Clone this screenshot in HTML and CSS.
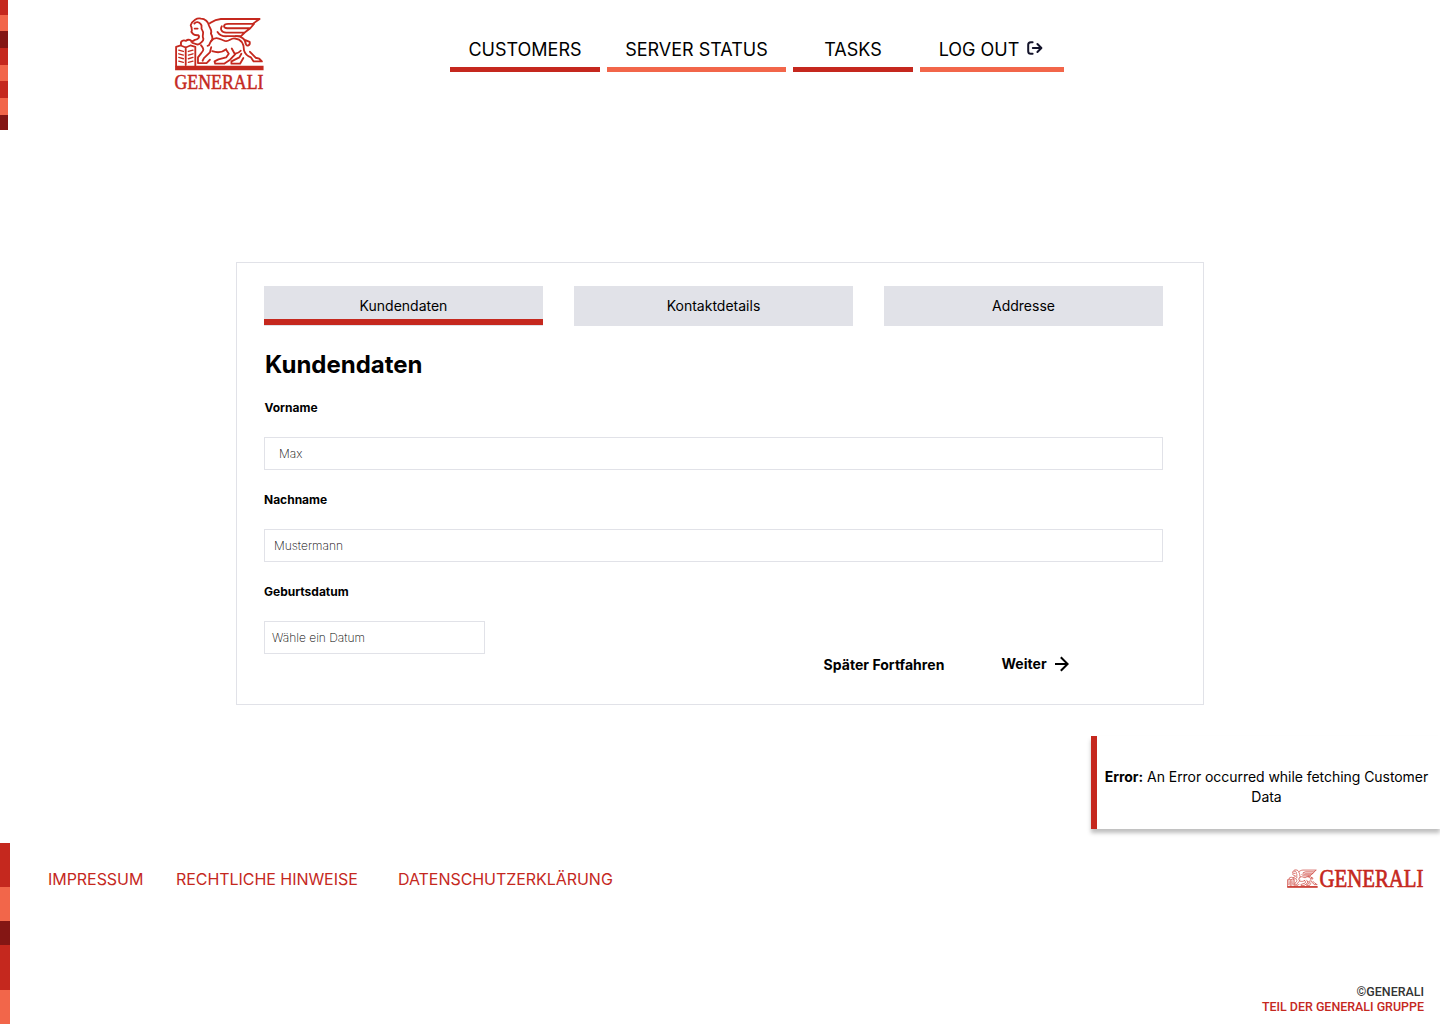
FILE: index.html
```html
<!DOCTYPE html>
<html lang="de">
<head>
<meta charset="utf-8">
<title>Generali – Kundendaten</title>
<link rel="stylesheet" href="styles.css">
</head>
<body>
<svg width="0" height="0" class="defs" aria-hidden="true">
  <symbol id="lion" viewBox="28 18 272 166">
    <g fill="none" stroke="currentColor" stroke-width="5.5" stroke-linejoin="round" stroke-linecap="round">
      <path d="M33 168V111L47 107L62 113L76 107L91 111V168M62 113V166"/>
      <path stroke-width="4" d="M41 121L55 125M41 132L55 136M41 143L55 147M41 154L55 158M70 125L84 121M70 136L84 132M70 147L84 143M70 158L84 154"/>
      <path d="M48 104C45 94 54 89 63 93C70 86 80 92 79 96L90 90C99 89 106 82 100 76C94 76 88 77 84 72L79 66C83 61 79 59 80 54L77 46C83 31 96 23 108 26C121 26 130 36 132 46C135 56 143 62 138 71C143 80 146 87 139 94C132 99 137 108 128 108"/>
      <path d="M88 41C93 34 103 36 107 42C115 49 105 53 112 61C119 69 111 75 114 83C120 93 108 99 102 103C94 107 87 99 82 99M89 56H98"/>
      <path d="M108 106C117 117 118 121 109 130L99 143V160H125L135 150M113 153L117 145L135 128L139 112"/>
      <path d="M135 40C145 33 151 28 168 27H285L264 42H190C174 42 174 55 187 55H257L268 42M257 55L240 68H184C169 68 166 57 171 49M240 68L229 79H187C173 80 163 74 158 66"/>
      <path d="M139 93C152 79 162 86 177 92C191 101 198 82 211 86C230 88 238 103 238 122C241 132 250 140 259 143L267 155H292L284 147L273 144L256 126"/>
      <path d="M213 79C230 78 243 88 243 102C246 112 258 107 255 96L242 91M142 124C159 130 175 126 184 118M184 120L192 132L184 143L161 149L149 155L151 162H178L196 150L211 134L201 116"/>
      <path d="M211 132C218 131 224 128 228 123M230 132L224 143L200 155V162H226L236 145"/>
    </g>
    <path fill="currentColor" d="M30 168H297V182H30Z"/>
  </symbol>
</svg>

<header class="header">
  <div class="stripes stripes-top"></div>
  <a class="logo">
    <svg class="logo-lion"><use href="#lion"/></svg>
    <svg class="logo-name" viewBox="0 0 92 26"><text x="0.5" y="19" textLength="89" lengthAdjust="spacingAndGlyphs">GENERALI</text></svg>
  </a>
  <nav class="nav">
    <a class="nav-item nav-customers">CUSTOMERS</a>
    <a class="nav-item nav-status">SERVER STATUS</a>
    <a class="nav-item nav-tasks">TASKS</a>
    <a class="nav-item nav-logout">LOG OUT
      <svg class="logout-icon" viewBox="0 0 16 14"><path d="M5.6 1.2H3.8Q1.2 1.2 1.2 3.8V10.2Q1.2 12.8 3.8 12.8H5.6M5.8 7H14.2M10.4 3L14.4 7L10.4 11"/></svg>
    </a>
  </nav>
</header>

<main class="main">
  <section class="card">
    <div class="tabs">
      <a class="tab tab-active">Kundendaten</a>
      <a class="tab">Kontaktdetails</a>
      <a class="tab">Addresse</a>
    </div>
    <h1 class="title">Kundendaten</h1>
    <div class="field"><span class="label label-first">Vorname</span><div class="input input-first">Max</div></div>
    <div class="field"><span class="label">Nachname</span><div class="input input-last">Mustermann</div></div>
    <div class="field"><span class="label">Geburtsdatum</span><div class="input input-date">Wähle ein Datum</div></div>
    <div class="actions">
      <a class="later">Später Fortfahren</a>
      <a class="next">Weiter
        <svg class="arrow" viewBox="0 0 14 16"><path d="M0 8H12.5M5.8 1.2L12.6 8L5.8 14.8"/></svg>
      </a>
    </div>
  </section>
</main>

<aside class="toast"><p class="toast-text"><b>Error:</b> An Error occurred while fetching Customer Data</p></aside>

<footer class="footer">
  <div class="stripes stripes-bottom"></div>
  <nav class="links">
    <a class="link-imprint">IMPRESSUM</a>
    <a class="link-legal">RECHTLICHE HINWEISE</a>
    <a>DATENSCHUTZERKLÄRUNG</a>
  </nav>
  <div class="footer-side">
    <div class="footer-logo">
      <svg class="footer-lion"><use href="#lion"/></svg>
      <svg class="footer-name" viewBox="0 0 106 32"><text x="0.5" y="24" textLength="104" lengthAdjust="spacingAndGlyphs">GENERALI</text></svg>
    </div>
    <div class="legal">©GENERALI<br><span class="legal-group">TEIL DER GENERALI GRUPPE</span></div>
  </div>
</footer>
</body>
</html>
```
FILE: styles.css
```css
:root {
  --red: #c5281e;
  --coral: #f2664a;
  --dark: #841614;
  --line: #e1e2e8;
}

* { box-sizing: border-box; }

body {
  margin: 0;
  height: 1024px;
  display: flex;
  flex-direction: column;
  overflow: hidden;
  background: #fff;
  color: #000;
  font-family: Inter, "Liberation Sans", sans-serif;
}

.defs { position: absolute; }

.header { display: flex; height: 130px; }

.stripes { flex: none; }

.stripes-top {
  width: 8px;
  background: linear-gradient(var(--red) 15px, var(--coral) 15px 31.5px, var(--dark) 31.5px 48.5px, var(--red) 48.5px 65px, var(--coral) 65px 81.5px, var(--red) 81.5px 98.5px, var(--coral) 98.5px 115px, var(--dark) 115px);
}

.logo {
  display: flex;
  flex-direction: column;
  width: 92px;
  margin: 16px 0 0 166px;
  color: var(--red);
}

.logo-lion { width: 91px; height: 55px; }
.logo-name { width: 92px; height: 26px; margin-top: -1px; overflow: visible; }

.logo-name text,
.footer-name text {
  font-family: "Liberation Serif", serif;
  fill: currentColor;
  stroke: currentColor;
}

.logo-name text { font-size: 20.5px; stroke-width: 0.5px; }
.footer-name text { font-size: 25px; stroke-width: 0.7px; }

.nav {
  display: flex;
  gap: 7px;
  height: 72px;
  padding-top: 30px;
  margin-left: 184px;
}

.nav-item {
  display: flex;
  justify-content: center;
  padding-top: 2px;
  border-bottom: 5px solid var(--red);
  font-size: 18px;
  line-height: 35px;
  white-space: nowrap;
}

.nav-customers { width: 150px; }
.nav-status { width: 179px; border-color: var(--coral); }
.nav-tasks { width: 120px; }
.nav-logout { width: 144px; gap: 8px; padding-right: 2px; border-color: var(--coral); }

.logout-icon {
  width: 16px;
  height: 14px;
  margin-top: 9px;
  fill: none;
  stroke: #14142b;
  stroke-width: 2;
  stroke-linecap: round;
  stroke-linejoin: round;
}

.main { padding: 132px 236px 0; height: 713px; }

.card {
  height: 443px;
  padding: 23px 40px 0 27px;
  border: 1px solid var(--line);
}

.tabs { display: grid; grid-template-columns: repeat(3, 279px); gap: 31px; }

.tab {
  height: 40px;
  background: var(--line);
  font-size: 14px;
  line-height: 40px;
  text-align: center;
}

.tab-active { background: linear-gradient(var(--line) 33px, var(--red) 33px 39px, var(--line) 39px); }

.title {
  margin: 23px 0 18px;
  padding-left: 1px;
  font-size: 24px;
  font-weight: 700;
  line-height: 32px;
}

.field { height: 92px; }
.label { display: block; font-size: 12px; font-weight: 700; line-height: 18px; margin-bottom: 20px; }
.label-first { padding-left: 0.5px; }

.input {
  width: 899px;
  height: 33px;
  border: 1px solid var(--line);
  font-size: 12px;
  font-weight: 200;
  line-height: 32px;
}

.input-first { padding-left: 14px; }
.input-last { padding-left: 9px; }
.input-date { width: 221px; padding-left: 7px; }

.actions {
  display: flex;
  gap: 57px;
  margin: -21px 0 0 559.5px;
  font-size: 14px;
  font-weight: 700;
  line-height: 20px;
  letter-spacing: 0.04px;
}

.later { padding-top: 1px; }
.next { display: flex; gap: 8px; }

.arrow {
  width: 14px;
  height: 16px;
  margin-top: 2px;
  fill: none;
  stroke: #000;
  stroke-width: 2;
}

.toast {
  position: absolute;
  top: 736px;
  right: 0;
  width: 349px;
  height: 93px;
  padding: 31px 6px 0 2px;
  border-left: 6px solid var(--red);
  background: #fff;
  box-shadow: 0 4px 4px rgba(0, 0, 0, 0.25);
}

.toast-text { margin: 0; font-size: 14px; line-height: 20px; letter-spacing: -0.05px; text-align: center; }

.footer { display: flex; height: 181px; color: var(--red); }

.stripes-bottom {
  width: 10px;
  background: linear-gradient(var(--red) 44px, var(--coral) 44px 78.5px, var(--dark) 78.5px 102px, var(--red) 102px 147px, var(--coral) 147px);
}

.links {
  display: flex;
  margin: 26px auto 0 38px;
  font-size: 16px;
  line-height: 20px;
  letter-spacing: -0.05px;
}

.link-imprint { width: 128px; }
.link-legal { width: 222px; }

.footer-side {
  display: flex;
  flex-direction: column;
  justify-content: space-between;
  align-items: flex-end;
  padding: 20px 16px 10px 0;
}

.footer-logo { display: flex; gap: 1px; margin-right: -1px; }
.footer-lion { width: 31px; height: 19px; margin-top: 6px; }
.footer-name { width: 106px; height: 32px; overflow: visible; }

.legal {
  color: #333;
  font-family: Roboto, sans-serif;
  font-size: 12.45px;
  font-weight: 500;
  line-height: 15px;
  text-align: right;
}

.legal-group { color: var(--red); }
```
